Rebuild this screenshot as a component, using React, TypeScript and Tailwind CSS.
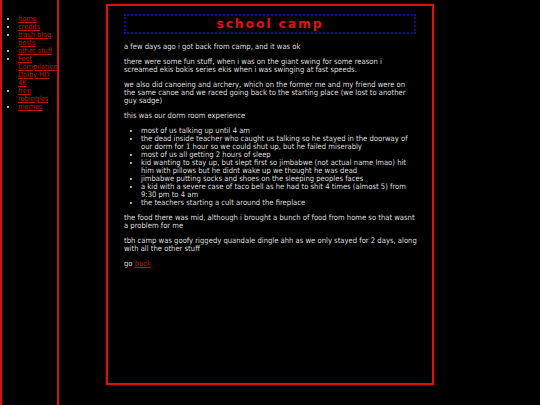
import React from "react";

const links: string[] = ["home", "credits", "trash blog posts", "other stuff", "Feet Compilation Dolby HD 4K", "free robingles", "memes"];

const items: string[] = [
  "most of us talking up until 4 am",
  "the dead inside teacher who caught us talking so he stayed in the doorway of our dorm for 1 hour so we could shut up, but he failed miserably",
  "most of us all getting 2 hours of sleep",
  "kid wanting to stay up, but slept first so jimbabwe (not actual name lmao) hit him with pillows but he didnt wake up we thought he was dead",
  "jimbabwe putting socks and shoes on the sleeping peoples faces",
  "a kid with a severe case of taco bell as he had to shit 4 times (almost 5) from 9:30 pm to 4 am",
  "the teachers starting a cult around the fireplace",
];

export default function App() {
  return (
    <div className="flex h-[405px] w-[540px] overflow-hidden bg-black font-['DejaVu_Sans_Condensed','DejaVu_Sans',sans-serif] text-[7.6px] leading-[8px] text-[#dddddd]">
      <div className="h-[405px] w-[59px] shrink-0 border-l-2 border-r-2 border-[#c81414] text-[7.3px]">
        <ul className="mt-[15px] list-disc pl-[16px] marker:text-[#dddddd]">
          {links.map((l) => (
            <li key={l}>
              <a href="#" className="text-[#c41010] underline">{l}</a>
            </li>
          ))}
        </ul>
      </div>
      <div className="ml-[47px] mt-[4px] h-[381px] w-[328px] shrink-0 border-2 border-[#d41414] pl-[16px] pr-[16px] pt-[8px] shadow-[0_0_2px_#900]">
        <div className="flex h-[20px] items-center justify-center border-2 border-dotted border-[#0a0aaa]">
          <h1 className="font-['DejaVu_Sans',sans-serif] text-[12.5px] font-bold leading-[14px] tracking-[1.8px] text-[#e01010]">school camp</h1>
        </div>
        <p className="mt-[9px]">a few days ago i got back from camp, and it was ok</p>
        <p className="mt-[7px]">there were some fun stuff, when i was on the giant swing for some reason i screamed ekis bokis series ekis when i was swinging at fast speeds.</p>
        <p className="mt-[7px]">we also did canoeing and archery, which on the former me and my friend were on the same canoe and we raced going back to the starting place (we lost to another guy sadge)</p>
        <p className="mt-[7px]">this was our dorm room experience</p>
        <ul className="mt-[7px] list-disc pl-[17px]">
          {items.map((it) => (
            <li key={it}>{it}</li>
          ))}
        </ul>
        <p className="mt-[7px]">the food there was mid, although i brought a bunch of food from home so that wasnt a problem for me</p>
        <p className="mr-[-3px] mt-[7px]">tbh camp was goofy riggedy quandale dingle ahh as we only stayed for 2 days, along with all the other stuff</p>
        <p className="mt-[7px]">go <a href="#" className="text-[#c41010] underline">back</a></p>
      </div>
    </div>
  );
}
